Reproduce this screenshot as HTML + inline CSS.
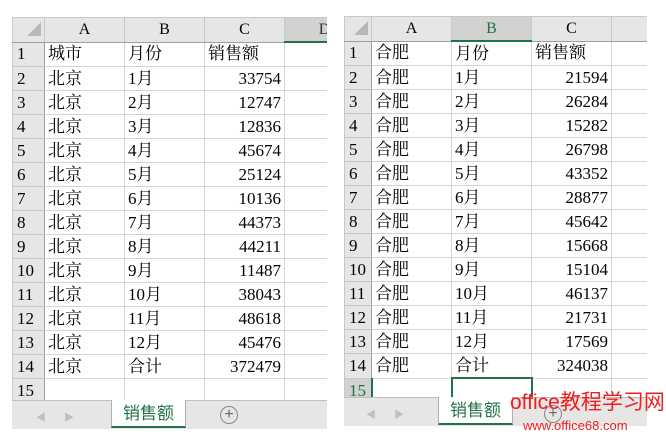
<!DOCTYPE html><html><head><meta charset="utf-8"><style>
body{margin:0;width:666px;height:441px;background:#fff;position:relative;overflow:hidden;font-family:"Liberation Serif","Noto Serif CJK SC",serif;}
.s{position:absolute;overflow:hidden;background:#fff}
table{border-collapse:collapse;table-layout:fixed;position:absolute;left:0;top:0}
td{border:1px solid #d4d4d4;height:23px;padding:0 3px;font-size:17px;line-height:20px;white-space:nowrap;overflow:hidden;color:#000}
tr.h td{background:#e6e6e6;text-align:center;font-size:16px;border-color:#c8c8c8;border-bottom:1px solid #9f9f9f}
td.n{background:#e6e6e6;text-align:left;padding-left:4px;border-color:#c8c8c8;border-right:1px solid #9f9f9f;font-size:17px}
td.r{text-align:right}
.sel{background:#d2d2d2!important;border-bottom:2px solid #217346!important;color:#217346!important}
.tabs{position:absolute;background:#e6e6e6;border-top:1px solid #c0c0c0}
.tab{position:absolute;top:-1px;height:26px;background:#fff;border:1px solid #b0b0b0;border-top:none;border-bottom:2px solid #217346;color:#217346;font-family:"Noto Sans CJK SC",sans-serif;font-size:17px;text-align:center;line-height:24px}
.arr{position:absolute;color:#c0c0c0;font-size:10px;top:8px}
.corner{position:absolute;width:0;height:0;border-left:14px solid transparent;border-bottom:14px solid #b8b8b8}
</style></head><body>

<div class="s" style="left:12px;top:17px;width:315px;height:384px">
<table style="width:352px">
<colgroup><col style="width:32px"><col style="width:80px"><col style="width:80px"><col style="width:80px"><col style="width:80px"></colgroup>
<tr class="h"><td></td><td>A</td><td>B</td><td>C</td><td class="sel" style="color:#333!important">D</td></tr>
<tr><td class="n">1</td><td>城市</td><td>月份</td><td>销售额</td><td></td></tr>
<tr><td class="n">2</td><td>北京</td><td>1月</td><td class="r">33754</td><td></td></tr>
<tr><td class="n">3</td><td>北京</td><td>2月</td><td class="r">12747</td><td></td></tr>
<tr><td class="n">4</td><td>北京</td><td>3月</td><td class="r">12836</td><td></td></tr>
<tr><td class="n">5</td><td>北京</td><td>4月</td><td class="r">45674</td><td></td></tr>
<tr><td class="n">6</td><td>北京</td><td>5月</td><td class="r">25124</td><td></td></tr>
<tr><td class="n">7</td><td>北京</td><td>6月</td><td class="r">10136</td><td></td></tr>
<tr><td class="n">8</td><td>北京</td><td>7月</td><td class="r">44373</td><td></td></tr>
<tr><td class="n">9</td><td>北京</td><td>8月</td><td class="r">44211</td><td></td></tr>
<tr><td class="n">10</td><td>北京</td><td>9月</td><td class="r">11487</td><td></td></tr>
<tr><td class="n">11</td><td>北京</td><td>10月</td><td class="r">38043</td><td></td></tr>
<tr><td class="n">12</td><td>北京</td><td>11月</td><td class="r">48618</td><td></td></tr>
<tr><td class="n">13</td><td>北京</td><td>12月</td><td class="r">45476</td><td></td></tr>
<tr><td class="n">14</td><td>北京</td><td>合计</td><td class="r">372479</td><td></td></tr>
<tr><td class="n">15</td><td></td><td></td><td></td><td></td></tr>
</table>
<div class="corner" style="left:15px;top:5px"></div>
</div>
<div class="tabs" style="left:12px;top:400px;width:315px;height:28px">
<span class="arr" style="left:24px">◀</span><span class="arr" style="left:52px">▶</span>
<div class="tab" style="left:99px;width:73px">销售额</div>
<div style="position:absolute;left:208px;top:5px;width:16px;height:16px;border:1px solid #888;border-radius:50%;color:#666;font-size:16px;line-height:16px;text-align:center;font-family:'Liberation Sans'">+</div>
</div>

<div class="s" style="left:344px;top:16px;width:303px;height:382px">
<table style="width:340px">
<colgroup><col style="width:27px"><col style="width:80px"><col style="width:80px"><col style="width:80px"><col style="width:73px"></colgroup>
<tr class="h"><td></td><td>A</td><td class="sel">B</td><td>C</td><td></td></tr>
<tr><td class="n">1</td><td>合肥</td><td>月份</td><td>销售额</td><td></td></tr>
<tr><td class="n">2</td><td>合肥</td><td>1月</td><td class="r">21594</td><td></td></tr>
<tr><td class="n">3</td><td>合肥</td><td>2月</td><td class="r">26284</td><td></td></tr>
<tr><td class="n">4</td><td>合肥</td><td>3月</td><td class="r">15282</td><td></td></tr>
<tr><td class="n">5</td><td>合肥</td><td>4月</td><td class="r">26798</td><td></td></tr>
<tr><td class="n">6</td><td>合肥</td><td>5月</td><td class="r">43352</td><td></td></tr>
<tr><td class="n">7</td><td>合肥</td><td>6月</td><td class="r">28877</td><td></td></tr>
<tr><td class="n">8</td><td>合肥</td><td>7月</td><td class="r">45642</td><td></td></tr>
<tr><td class="n">9</td><td>合肥</td><td>8月</td><td class="r">15668</td><td></td></tr>
<tr><td class="n">10</td><td>合肥</td><td>9月</td><td class="r">15104</td><td></td></tr>
<tr><td class="n">11</td><td>合肥</td><td>10月</td><td class="r">46137</td><td></td></tr>
<tr><td class="n">12</td><td>合肥</td><td>11月</td><td class="r">21731</td><td></td></tr>
<tr><td class="n">13</td><td>合肥</td><td>12月</td><td class="r">17569</td><td></td></tr>
<tr><td class="n">14</td><td>合肥</td><td>合计</td><td class="r">324038</td><td></td></tr>
<tr><td class="n" style="color:#217346;background:#d2d2d2;border-right:2px solid #217346">15</td><td></td><td style="border:2px solid #217346"></td><td></td><td></td></tr>
</table>
<div class="corner" style="left:10px;top:5px"></div>
</div>
<div class="tabs" style="left:344px;top:397px;width:303px;height:28px">
<span class="arr" style="left:22px">◀</span><span class="arr" style="left:50px">▶</span>
<div class="tab" style="left:94px;width:73px">销售额</div>
<div style="position:absolute;left:200px;top:7px;width:16px;height:16px;border:1px solid #888;border-radius:50%;color:#666;font-size:16px;line-height:16px;text-align:center;font-family:'Liberation Sans'">+</div>
</div>
<div style="position:absolute;left:510px;top:391px;color:#f21d1d;font-family:'Liberation Sans','Noto Sans CJK SC',sans-serif;font-size:21px;line-height:24px">office教程学习网</div>
<div style="position:absolute;left:523px;top:418px;color:#f21d1d;font-family:'Liberation Sans',sans-serif;font-size:13px;line-height:16px">www.office68.com</div>
</body></html>
